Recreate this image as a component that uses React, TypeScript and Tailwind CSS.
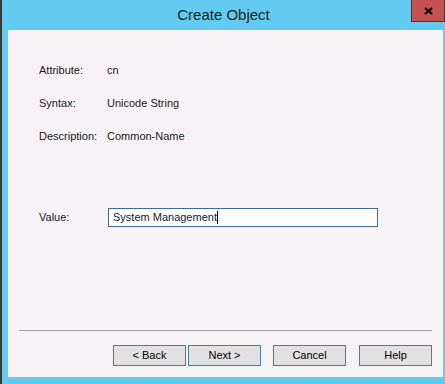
import React from 'react';

const rows = [
  { label: 'Attribute:', value: 'cn' },
  { label: 'Syntax:', value: 'Unicode String' },
  { label: 'Description:', value: 'Common-Name' },
];

function DialogButton({ children, active }: { children: React.ReactNode; active?: boolean }) {
  return (
    <button
      className={
        'w-[73px] h-[21px] bg-[#e1e1e1] border text-[11px] text-black flex items-center justify-center ' +
        (active ? 'border-[#3c7fb1]' : 'border-[#707070]')
      }
    >
      {children}
    </button>
  );
}

export default function App() {
  return (
    <div
      className="relative w-[445px] h-[384px] bg-[#62cbef] border-l-2 border-[#3a3a3a] flex flex-col"
      style={{ fontFamily: '"Liberation Sans", Arial, sans-serif' }}
    >
      <div className="h-[30px] flex items-center justify-center text-[15px] text-[#1e1e1e]">
        Create Object
      </div>
      <div className="absolute top-0 right-0 w-[34px] h-[22px] bg-[#c75050] border-l border-b border-r border-[#3a3a3a] flex items-center justify-center">
        <svg width="9" height="8" viewBox="0 0 9 8" className="block">
          <path d="M1 1 L8 7 M8 1 L1 7" stroke="#000" strokeWidth="2.2" fill="none" />
        </svg>
      </div>

      <div className="ml-[6px] mr-[2px] mb-[7px] flex-1 bg-[#f6f2f6] flex flex-col text-[11px] text-[#1a1a1a]">
        <div className="pt-[24px] pl-[31px] flex flex-col">
          {rows.map((r) => (
            <div key={r.label} className="h-[33px] flex items-center">
              <span className="w-[68px]">{r.label}</span>
              <span>{r.value}</span>
            </div>
          ))}
          <div className="mt-[55px] flex items-center">
            <span className="w-[69px]">Value:</span>
            <div className="w-[270px] h-[19px] bg-white border border-[#3d6a98] flex items-center pl-[4px]">
              <span>System Management</span>
              <span className="w-px h-[13px] bg-black" />
            </div>
          </div>
        </div>

        <div className="flex-1" />
        <div className="mx-[11px] h-px bg-[#a0a0a0]" />
        <div className="mt-[14px] mb-[11px] pr-[11px] flex justify-end">
          <DialogButton>&lt; Back</DialogButton>
          <div className="ml-[2px]">
            <DialogButton active>Next &gt;</DialogButton>
          </div>
          <div className="ml-[12px]">
            <DialogButton>Cancel</DialogButton>
          </div>
          <div className="ml-[13px]">
            <DialogButton>Help</DialogButton>
          </div>
        </div>
      </div>
    </div>
  );
}
